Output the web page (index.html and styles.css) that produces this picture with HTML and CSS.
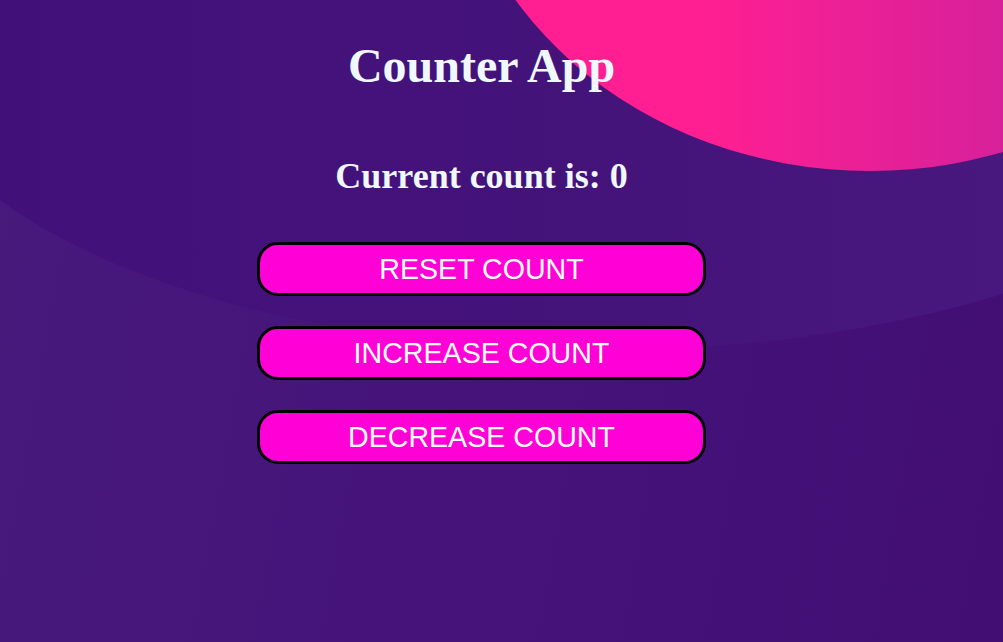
FILE: index.html
```html
<!DOCTYPE html>
<html>
<head>
<meta charset="utf-8">
<title>Counter App</title>
<link rel="stylesheet" href="styles.css">
</head>
<body>
<div class="bg">
  <div class="glow"></div>
  <div class="blob"></div>
</div>
<main class="app">
  <h1 class="title">Counter App</h1>
  <h2 class="count">Current count is: 0</h2>
  <div class="actions">
    <button class="btn">Reset Count</button>
    <button class="btn">Increase Count</button>
    <button class="btn">Decrease Count</button>
  </div>
</main>
</body>
</html>
```

FILE: styles.css
```css
html, body {
  margin: 0;
  padding: 0;
  height: 100%;
}
body {
  background: linear-gradient(100deg, #481a7c 0%, #45137a 50%, #420e74 100%);
  overflow: hidden;
  position: relative;
  font-family: "Liberation Serif", "Times New Roman", serif;
}
.bg {
  position: absolute;
  inset: 0;
  overflow: hidden;
}
.glow {
  position: absolute;
  left: -100px;
  top: -268px;
  width: 1400px;
  height: 618px;
  border-radius: 50%;
  background: linear-gradient(to right, #42107a 0%, #44137a 45%, #4a1b80 100%);
}
.blob {
  position: absolute;
  left: 450px;
  top: -567px;
  width: 840px;
  height: 738px;
  border-radius: 50%;
  background: linear-gradient(to right, #ff1f92 0%, #ff1f92 30%, #d2219b 70%, #c8229c 100%);
}
.app {
  position: relative;
  width: 963px;
  display: flex;
  flex-direction: column;
  align-items: center;
  color: #f0f8ff;
}
.title {
  margin: 36px 0 0;
  font-size: 48px;
  font-weight: bold;
  line-height: 60px;
}
.count {
  margin: 58px 0 0;
  font-size: 36px;
  font-weight: bold;
  line-height: 44px;
}
.actions {
  margin-top: 44px;
  display: flex;
  flex-direction: column;
  gap: 30px;
}
.btn {
  box-sizing: border-box;
  width: 449px;
  height: 54px;
  border: 3px solid #000;
  border-radius: 21px;
  background: #ff00d6;
  color: #fff;
  font-family: "Liberation Sans", Arial, sans-serif;
  font-size: 28.6px;
  text-transform: uppercase;
  padding: 0;
  cursor: pointer;
}
```
